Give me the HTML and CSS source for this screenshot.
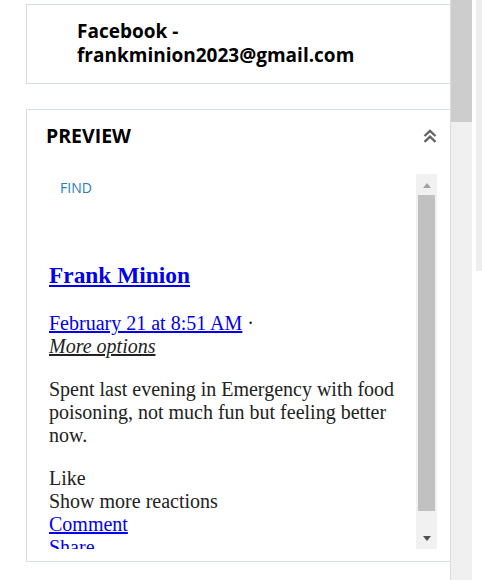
FILE: index.html
```html
<!DOCTYPE html>
<html>
<head>
<meta charset="utf-8">
<link rel="stylesheet" href="styles.css">
</head>
<body>
<div class="main">
  <div class="card account">
    <div class="account-title">Facebook -<br>frankminion2023@gmail.com</div>
  </div>
  <div class="card preview">
    <div class="preview-head">
      <h2 class="preview-title">PREVIEW</h2>
      <svg class="collapse" width="14" height="14" viewBox="0 0 14 14" aria-hidden="true">
        <polyline points="1.5,7 7,1.8 12.5,7" fill="none" stroke="#666" stroke-width="2.4"/>
        <polyline points="1.5,12.8 7,7.6 12.5,12.8" fill="none" stroke="#666" stroke-width="2.4"/>
      </svg>
    </div>
    <div class="frame">
      <div class="frame-content">
        <div class="find">FIND</div>
        <h3 class="author"><a href="#">Frank Minion</a></h3>
        <div class="meta"><a href="#">February 21 at 8:51 AM</a> ·</div>
        <div class="more"><a href="#">More options</a></div>
        <p class="post">Spent last evening in Emergency with food poisoning, not much fun but feeling better now.</p>
        <div class="actions">
          <div>Like</div>
          <div>Show more reactions</div>
          <div><a href="#">Comment</a></div>
          <div><a href="#">Share</a></div>
        </div>
      </div>
      <div class="vscroll">
        <div class="vbtn"><span class="tri-up"></span></div>
        <div class="vthumb"></div>
        <div class="vbtn"><span class="tri-down"></span></div>
      </div>
    </div>
  </div>
</div>
<div class="page-scroll"><div class="page-thumb"></div></div>
<div class="spacer"></div>
<div class="outer-scroll"><div class="outer-thumb"></div></div>
</body>
</html>
```
FILE: styles.css
```css
html, body {
  margin: 0;
  padding: 0;
}
body {
  display: flex;
  height: 580px;
  overflow: hidden;
  background: #fff;
}
.main {
  width: 451px;
  flex: none;
  box-sizing: border-box;
  border-right: 1px solid #d6dde4;
  padding-top: 4px;
}
.card {
  margin-left: 26px;
  border: 1px solid #d6dde4;
  border-right: none;
}
.account {
  padding: 14px 0 16px 50px;
}
.account-title {
  font-family: "Open Sans", sans-serif;
  font-weight: 700;
  font-size: 19px;
  line-height: 24px;
  color: #000;
}
.preview {
  margin-top: 25px;
  padding: 12px 13px 12px 19px;
}
.preview-head {
  display: flex;
  justify-content: space-between;
  align-items: center;
  height: 28px;
}
.preview-title {
  margin: 0;
  font-family: "Open Sans", sans-serif;
  font-weight: 700;
  font-size: 19.5px;
  line-height: 28px;
  color: #000;
}
.collapse {
  display: block;
}
.frame {
  margin-top: 24px;
  height: 375px;
  display: flex;
}
.frame-content {
  flex: 1;
  overflow: hidden;
  padding: 4px 0 0 3px;
  font-family: "Liberation Serif", "Times New Roman", serif;
  font-size: 20px;
  line-height: 23px;
  color: #222;
}
.frame-content a {
  color: #0000ee;
  text-decoration: underline;
}
.find {
  font-family: "Open Sans", sans-serif;
  font-size: 14px;
  line-height: 19px;
  color: #2b7bb9;
  padding-left: 11px;
}
.author {
  margin: 65px 0 23px;
  font-size: 23.4px;
  line-height: 27px;
  font-weight: 700;
}
.more a {
  color: #222;
  font-style: italic;
}
.post {
  margin: 20px 0;
}
.vscroll {
  width: 21px;
  flex: none;
  background: #f1f1f1;
  display: flex;
  flex-direction: column;
}
.vbtn {
  height: 21px;
  display: flex;
  align-items: center;
  justify-content: center;
}
.tri-up {
  width: 0;
  height: 0;
  border-left: 4.5px solid transparent;
  border-right: 4.5px solid transparent;
  border-bottom: 5px solid #a3a3a3;
  margin-top: 2px;
}
.tri-down {
  width: 0;
  height: 0;
  border-left: 4.5px solid transparent;
  border-right: 4.5px solid transparent;
  border-top: 5px solid #505050;
}
.vthumb {
  height: 316px;
  margin: 0 2px;
  background: #c1c1c1;
  flex: none;
}
.vscroll .vbtn:last-child {
  margin-top: auto;
}
.page-scroll {
  width: 21px;
  flex: none;
  background: #f0f0f0;
}
.page-thumb {
  height: 122px;
  background: #cdcdcd;
}
.spacer {
  width: 4px;
  flex: none;
}
.outer-scroll {
  width: 6px;
  flex: none;
}
.outer-thumb {
  height: 271px;
  background: #eeeeee;
}
```
